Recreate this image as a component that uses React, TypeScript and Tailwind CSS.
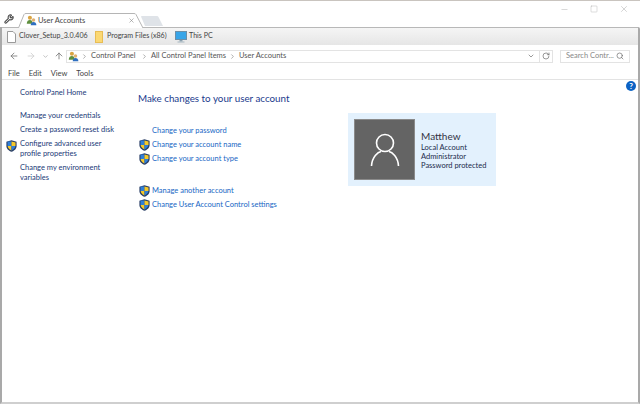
import { ArrowLeft, ArrowRight, ArrowUp, ChevronDown, ChevronRight, RotateCw, Search, Minus, Square, X, Wrench } from "lucide-react";

const Shield = () => (
  <svg width="11" height="12" viewBox="0 0 11 12" className="shrink-0">
    <path d="M5.5 0.3 L10.6 1.8 V6 C10.6 9 8 10.9 5.5 11.8 C3 10.9 0.4 9 0.4 6 V1.8 Z" fill="#2a3f66" />
    <path d="M5.5 1.5 H1.5 V6 H5.5 Z" fill="#2f7fd8" />
    <path d="M5.5 1.5 L9.5 2.4 V6 H5.5 Z" fill="#f6c928" />
    <path d="M5.5 6 H1.6 C1.9 8 3.7 9.7 5.5 10.5 Z" fill="#f6c928" />
    <path d="M5.5 6 H9.4 C9.1 8 7.3 9.7 5.5 10.5 Z" fill="#2f7fd8" />
  </svg>
);

const UsersIcon = () => (
  <svg width="11" height="11" viewBox="0 0 14 14" className="shrink-0">
    <circle cx="5" cy="3.6" r="2.6" fill="#d9a441" />
    <path d="M1 11 C1 7.5 3 6.4 5 6.4 C7 6.4 8.5 7.5 8.5 11 Z" fill="#5f8f3e" />
    <circle cx="9.6" cy="6.4" r="2.2" fill="#e0b070" />
    <path d="M6 13.2 C6 10.4 7.8 9 9.6 9 C11.4 9 13.2 10.4 13.2 13.2 Z" fill="#2f6fc0" />
  </svg>
);

const FileIcon = () => (
  <svg width="9" height="12" viewBox="0 0 9 12" className="shrink-0">
    <path d="M0.5 0.5 H6 L8.5 3 V11.5 H0.5 Z" fill="#fff" stroke="#9a9a9a" />
  </svg>
);

const FolderIcon = () => (
  <svg width="8" height="12" viewBox="0 0 8 12" className="shrink-0">
    <rect x="0.5" y="0.5" width="7" height="11" fill="#fbd873" stroke="#e8bd55" />
  </svg>
);

const MonitorIcon = () => (
  <svg width="12" height="12" viewBox="0 0 12 12" className="shrink-0">
    <rect x="0.5" y="0.5" width="11" height="8" fill="#38a5e8" stroke="#6c8fa8" />
    <rect x="4.5" y="9" width="3" height="1.5" fill="#8aa0ae" />
    <rect x="2.5" y="10.5" width="7" height="1" fill="#a8b8c2" />
  </svg>
);

const sideLinks = "text-[#1a3a78] leading-[10px]";

const TaskLink = ({ label, shield }: { label: string; shield?: boolean }) => (
  <div className="flex items-center h-[14px] pl-[1px]">
    <div className="w-[13px] shrink-0">{shield && <Shield />}</div>
    <span className="text-[#1766c4]">{label}</span>
  </div>
);

export default function App() {
  return (
    <div
      className="w-[640px] h-[404px] bg-white flex flex-col overflow-hidden text-[7.5px] text-[#444]"
      style={{ fontFamily: 'Lato, "Open Sans", sans-serif' }}
    >
      {/* title strip */}
      <div className="h-[27px] shrink-0 flex relative">
        <div className="absolute top-0 left-0 right-0 h-px bg-[#c9c4bf]" />
        <div className="w-[18px] flex items-end justify-center pb-[3px]">
          <Wrench size={10} strokeWidth={2.5} className="text-[#444]" />
        </div>
        <div className="relative w-[126px] h-[15px] mt-[13px] flex items-center pl-[8px] pr-[9px] z-10">
          <svg width="126" height="15" viewBox="0 0 126 15" className="absolute left-0 top-0">
            <path d="M0.5 15 L6 1.5 Q6.5 0.5 8 0.5 H116 Q117.5 0.5 118 1.5 L125 15" fill="#fff" stroke="#b5b5b5" />
          </svg>
          <div className="relative flex items-center gap-[1px] w-full">
            <UsersIcon />
            <span className="flex-1">User Accounts</span>
            <X size={7} className="text-[#888]" />
          </div>
        </div>
        <svg width="22" height="10" viewBox="0 0 22 10" className="mt-[16px] -ml-[3px]">
          <path d="M0 0.5 Q0 0 1 0 H16 Q17 0 17.5 1 L22 10 H4 Z" fill="#dfe3e8" />
        </svg>
        <div className="flex items-center gap-[21px] absolute right-[11px] top-[4px] text-[#999]">
          <Minus size={9} strokeWidth={1} />
          <Square size={8} strokeWidth={1} />
          <X size={10} strokeWidth={1} />
        </div>
      </div>

      <div className="flex-1 flex flex-col border-x-2 border-b-2 border-x-[#a9a9a9] border-b-[#cfcfcf] rounded-tr-[2px] min-h-0">
        {/* favourites */}
        <div className="h-[18px] shrink-0 flex items-center pl-[5px] bg-gradient-to-b from-[#f5f5f5] to-[#e6e6e6] border-t border-[#b8b8b8] text-[7.1px]">
          <FileIcon />
          <span className="ml-[3px] w-[76px]">Clover_Setup_3.0.406</span>
          <FolderIcon />
          <span className="ml-[4px] w-[68px]">Program Files (x86)</span>
          <MonitorIcon />
          <span className="ml-[2px]">This PC</span>
        </div>

        {/* address bar */}
        <div className="h-[21px] pt-[1px] shrink-0 flex items-center pl-[7px] pr-[8px] text-[#555]">
          <ArrowLeft size={10} className="text-[#777]" />
          <ArrowRight size={10} className="text-[#cfcfcf] ml-[7px]" />
          <ChevronDown size={7} className="text-[#999] ml-[6px]" />
          <ArrowUp size={10} className="text-[#777] ml-[5px]" />
          <div className="ml-[2px] flex-1 h-[13px] flex items-center border border-[#e3e3e3] pl-[1px]">
            <UsersIcon />
            <ChevronRight size={7} className="text-[#777] ml-[2px]" />
            <span className="ml-[3px] w-[50px]">Control Panel</span>
            <ChevronRight size={7} className="text-[#777]" />
            <span className="ml-[3px] w-[78px]">All Control Panel Items</span>
            <ChevronRight size={7} className="text-[#777]" />
            <span className="ml-[3px]">User Accounts</span>
            <div className="flex-1" />
            <ChevronDown size={8} className="text-[#666] mr-[4px]" />
            <div className="w-[13px] h-full border-l border-[#e3e3e3] flex items-center justify-center">
              <RotateCw size={8} className="text-[#666]" />
            </div>
          </div>
          <div className="ml-[7px] w-[70px] h-[13px] flex items-center justify-between border border-[#e3e3e3] px-[5px] text-[#888]">
            <span className="whitespace-nowrap">Search Contr...</span>
            <Search size={8} className="text-[#666]" />
          </div>
        </div>

        {/* menu */}
        <div className="h-[14px] pt-[2px] shrink-0 flex items-center gap-[9px] pl-[6px] border-b border-[#e3e3e3]">
          <span>File</span>
          <span>Edit</span>
          <span>View</span>
          <span>Tools</span>
        </div>

        {/* body */}
        <div className="flex-1 flex relative min-h-0">
          <div className="absolute right-[2px] top-[1px] w-[10px] h-[10px] rounded-full bg-[#0b62c4] text-white text-[8px] font-bold flex items-center justify-center">
            ?
          </div>

          <div className="w-[136px] shrink-0 pl-[4px] pt-[8px]">
            <div className={`${sideLinks} pl-[14px]`}>Control Panel Home</div>
            <div className={`${sideLinks} pl-[14px] mt-[13px]`}>Manage your credentials</div>
            <div className={`${sideLinks} pl-[14px] mt-[4px]`}>Create a password reset disk</div>
            <div className={`${sideLinks} flex mt-[4px]`}>
              <div className="w-[14px] pt-[1px]"><Shield /></div>
              <div>Configure advanced user<br />profile properties</div>
            </div>
            <div className={`${sideLinks} pl-[14px] mt-[4px]`}>Change my environment<br />variables</div>
          </div>

          <div className="pt-[10px]">
            <h1 className="text-[9.8px] leading-[16px] text-[#1a3a8c] font-normal">Make changes to your user account</h1>
            <div className="mt-[18px]">
              <TaskLink label="Change your password" />
              <TaskLink label="Change your account name" shield />
              <TaskLink label="Change your account type" shield />
            </div>
            <div className="mt-[18px]">
              <TaskLink label="Manage another account" shield />
              <TaskLink label="Change User Account Control settings" shield />
            </div>
          </div>

          <div className="absolute left-[346px] top-[33px] w-[148px] h-[73px] bg-[#e3f1fd] flex items-center pl-[6px]">
            <div className="w-[61px] h-[61px] shrink-0 bg-[#646464] flex items-center justify-center border border-[#8a8a8a]">
              <svg width="30" height="36" viewBox="0 0 30 36" fill="none" stroke="#fff" strokeWidth="1.6">
                <circle cx="15" cy="11" r="8.5" />
                <path d="M1.5 34 C2 25 8 20 11 19.5 M28.5 34 C28 25 22 20 19 19.5" />
              </svg>
            </div>
            <div className="ml-[6px] text-[#1c2c4c] leading-[9px]">
              <div className="text-[10px] leading-[13px] text-[#334]">Matthew</div>
              <div>Local Account</div>
              <div>Administrator</div>
              <div className="whitespace-nowrap">Password protected</div>
            </div>
          </div>
        </div>
      </div>
    </div>
  );
}
